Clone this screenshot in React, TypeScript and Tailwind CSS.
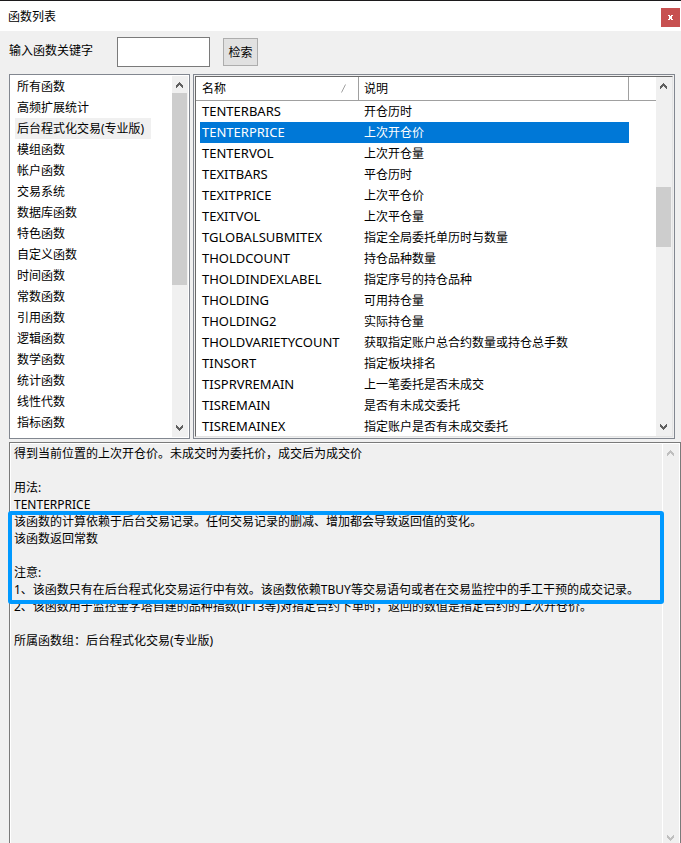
import clsx from "clsx";
import * as React from "react";

const GROUPS = [
  "所有函数",
  "高频扩展统计",
  "后台程式化交易(专业版)",
  "模组函数",
  "帐户函数",
  "交易系统",
  "数据库函数",
  "特色函数",
  "自定义函数",
  "时间函数",
  "常数函数",
  "引用函数",
  "逻辑函数",
  "数学函数",
  "统计函数",
  "线性代数",
  "指标函数",
];

const FUNCTIONS: { name: string; summary: string }[] = [
  { name: "TENTERBARS", summary: "开仓历时" },
  { name: "TENTERPRICE", summary: "上次开仓价" },
  { name: "TENTERVOL", summary: "上次开仓量" },
  { name: "TEXITBARS", summary: "平仓历时" },
  { name: "TEXITPRICE", summary: "上次平仓价" },
  { name: "TEXITVOL", summary: "上次平仓量" },
  { name: "TGLOBALSUBMITEX", summary: "指定全局委托单历时与数量" },
  { name: "THOLDCOUNT", summary: "持仓品种数量" },
  { name: "THOLDINDEXLABEL", summary: "指定序号的持仓品种" },
  { name: "THOLDING", summary: "可用持仓量" },
  { name: "THOLDING2", summary: "实际持仓量" },
  { name: "THOLDVARIETYCOUNT", summary: "获取指定账户总合约数量或持仓总手数" },
  { name: "TINSORT", summary: "指定板块排名" },
  { name: "TISPRVREMAIN", summary: "上一笔委托是否未成交" },
  { name: "TISREMAIN", summary: "是否有未成交委托" },
  { name: "TISREMAINEX", summary: "指定账户是否有未成交委托" },
];

const HELP_TEXT = [
  "得到当前位置的上次开仓价。未成交时为委托价，成交后为成交价",
  "",
  "用法:",
  "TENTERPRICE",
  "该函数的计算依赖于后台交易记录。任何交易记录的删减、增加都会导致返回值的变化。",
  "该函数返回常数",
  "",
  "注意:",
  "1、该函数只有在后台程式化交易运行中有效。该函数依赖TBUY等交易语句或者在交易监控中的手工干预的成交记录。",
  "2、该函数用于监控金字塔自建的品种指数(IFT3等)对指定合约下单时，返回的数值是指定合约的上次开仓价。",
  "",
  "所属函数组：后台程式化交易(专业版)",
].join("\n");

export default function App() {
  const [keyword, setKeyword] = React.useState("");
  const [group, setGroup] = React.useState(GROUPS[2]);
  const [selected, setSelected] = React.useState("TENTERPRICE");

  return (
    <div className="flex h-screen flex-col overflow-hidden border-t border-[#1c1a1c] bg-[#f0f0f0] font-['Noto_Sans','Noto_Sans_CJK_SC',sans-serif] text-[12px] leading-[17px] text-black">
      <header className="flex h-[30px] shrink-0 items-center justify-between bg-white pl-2">
        <h1>函数列表</h1>
        <button
          type="button"
          aria-label="关闭"
          className="mr-px mt-[3px] flex h-[19px] w-[19px] items-center justify-center bg-[#c75050]"
        >
          <svg width="5" height="5" viewBox="0 0 5 5" shapeRendering="crispEdges" aria-hidden>
            <path d="M0 0h2v1H0zM3 0h2v1H3zM1 1h3v3H1zM0 4h2v1H0zM3 4h2v1H3z" fill="#fff" />
          </svg>
        </button>
      </header>

      <form
        className="flex h-[43px] shrink-0 items-center pb-px pl-[9px]"
        onSubmit={(e) => e.preventDefault()}
      >
        <label htmlFor="keyword" className="w-[108px] pb-[3px]">
          输入函数关键字
        </label>
        <input
          id="keyword"
          value={keyword}
          onChange={(e) => setKeyword(e.target.value)}
          className="h-[30px] w-[93px] border border-[#7a7a7a] bg-white px-1 outline-none"
        />
        <button
          type="submit"
          className="ml-[13px] h-7 w-[35px] border border-[#adadad] bg-[#e1e1e1]"
        >
          检索
        </button>
      </form>

      <div className="flex h-[365px] shrink-0 gap-[3px] pl-[9px] pr-[6px]">
        <div className="flex w-[181px] shrink-0 border border-[#828790] bg-white py-px pr-px">
          <ul role="listbox" aria-label="函数组" className="min-w-0 flex-1 overflow-hidden pl-[5px]">
            {GROUPS.map((g) => (
              <li
                key={g}
                role="option"
                aria-selected={g === group}
                onClick={() => setGroup(g)}
                className="flex h-[21px] cursor-default items-center"
              >
                <span
                  className={clsx(
                    "whitespace-nowrap pl-[2px] pr-[7px] leading-[21px]",
                    g === group && "bg-[#f0f0f0]"
                  )}
                >
                  {g}
                </span>
              </li>
            ))}
          </ul>
          <ScrollBar thumb="h-[192px]" />
        </div>

        <div className="min-w-0 flex-1 border border-[#828790] bg-[#f0f0f0] p-px">
          <div className="flex h-full border border-b-[#e3e3e3] border-l-[#696969] border-r-[#e3e3e3] border-t-[#696969] bg-white">
            <div className="min-w-0 flex-1 overflow-hidden">
              <table className="w-full table-fixed border-separate border-spacing-0 text-left">
                <colgroup>
                  <col className="w-[4px]" />
                  <col className="w-[159px]" />
                  <col />
                  <col className="w-[27px]" />
                </colgroup>
                <thead>
                  <tr className="h-6">
                    <th className="border-b border-[#a0a0a0] p-0" />
                    <th className="border-b border-r border-[#a0a0a0] p-0 pl-[2px] pr-3 font-normal">
                      <span className="flex items-center justify-between">
                        名称
                        <svg width="5" height="9" viewBox="0 0 5 9" aria-hidden>
                          <path d="M0.5 8.5L4.5 0.5" stroke="#a0a0a0" />
                        </svg>
                      </span>
                    </th>
                    <th className="border-b border-r border-[#a0a0a0] p-0 pl-[5px] font-normal">
                      说明
                    </th>
                    <th className="border-b border-[#a0a0a0] p-0" />
                  </tr>
                </thead>
                <tbody>
                  {FUNCTIONS.map((f) => {
                    const active = f.name === selected;
                    return (
                      <tr
                        key={f.name}
                        aria-selected={active}
                        onClick={() => setSelected(f.name)}
                        className="h-[21px] cursor-default whitespace-nowrap"
                      >
                        <td className="p-0" />
                        <td
                          className={clsx(
                            "p-0 pl-[2px] text-[13px] leading-[17px]",
                            active && "bg-[#0078d7] text-white"
                          )}
                        >
                          {f.name}
                        </td>
                        <td className={clsx("p-0 pl-[5px]", active && "bg-[#0078d7] text-white")}>
                          {f.summary}
                        </td>
                        <td className="p-0" />
                      </tr>
                    );
                  })}
                </tbody>
              </table>
            </div>
            <ScrollBar offset="h-[93px]" thumb="h-[60px]" />
          </div>
        </div>
      </div>

      {/* the help box runs on past the bottom of the window */}
      <div className="relative -mb-1 ml-[9px] mt-[3px] flex min-h-0 flex-1 border-l border-r border-t border-[#7a7a7a]">
        <textarea
          readOnly
          aria-label="函数说明"
          value={HELP_TEXT}
          className="min-w-0 flex-1 resize-none overflow-hidden border-l border-r border-t border-white pl-[3px] pt-px outline-none"
        />
        <div className="flex border-r border-t border-white">
          <ScrollBar disabled />
        </div>
        {/* highlighted passage */}
        <div className="pointer-events-none absolute -left-[2px] right-4 top-[68px] h-[93px] rounded-[3px] border-4 border-[#0099ff]" />
      </div>
    </div>
  );
}

function ScrollBar({
  offset,
  thumb,
  disabled,
}: {
  offset?: string;
  thumb?: string;
  disabled?: boolean;
}) {
  const arrow = disabled ? "text-[#bfbfbf]" : "text-[#606060]";
  return (
    <div className="flex w-4 shrink-0 flex-col bg-[#f0f0f0]">
      <span className={clsx("flex h-[17px] w-[15px] items-center justify-center", arrow)}>
        <Chevron />
      </span>
      <div className="min-h-0 flex-1">
        {offset && <div className={offset} />}
        {thumb && <div className={clsx("w-[15px] bg-[#cdcdcd]", thumb)} />}
      </div>
      <span className={clsx("flex h-[17px] w-[15px] rotate-180 items-center justify-center", arrow)}>
        <Chevron />
      </span>
    </div>
  );
}

function Chevron() {
  return (
    <svg width="7" height="6" viewBox="0 0 7 6" shapeRendering="crispEdges" aria-hidden>
      <path
        d="M3 0h1v1h1v1h1v1h1v3h-1v-1h-1v-1h-1v-1h-1v1h-1v1h-1v1h-1v-3h1v-1h1v-1h1z"
        fill="currentColor"
      />
    </svg>
  );
}
